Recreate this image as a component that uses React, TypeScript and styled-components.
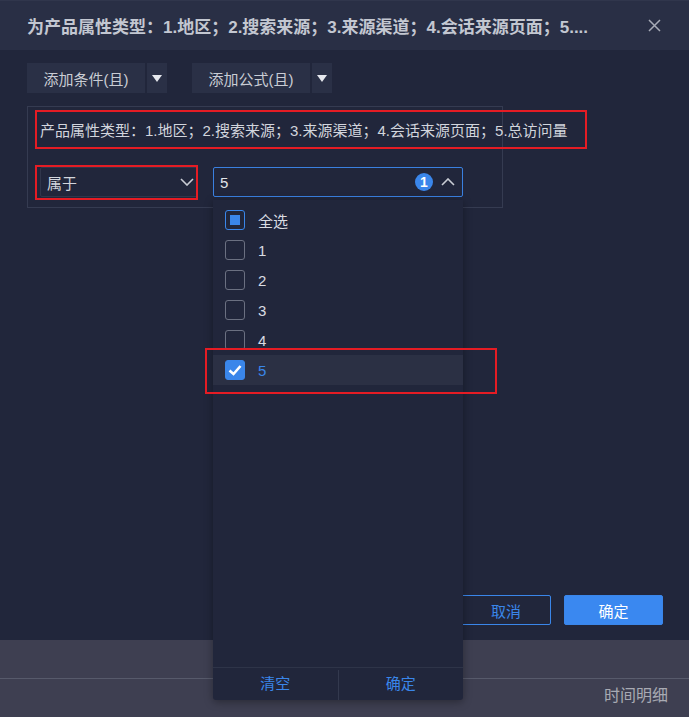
import React from 'react';
import styled, { createGlobalStyle } from 'styled-components';

const FONT = '"Liberation Sans", "Noto Sans CJK SC", sans-serif';

const GlobalStyle = createGlobalStyle`
  html, body {
    margin: 0;
    padding: 0;
    background: #3e3f51;
    font-family: ${FONT};
  }
  * { box-sizing: border-box; }
`;

const Page = styled.div`
  width: 689px;
  height: 717px;
  display: flex;
  flex-direction: column;
  overflow: hidden;
`;

const Modal = styled.div`
  height: 640px;
  background: #21263b;
  display: flex;
  flex-direction: column;
`;

const Header = styled.div`
  height: 50px;
  flex: none;
  background: #292f45;
  border-top: 1px solid #30364c;
  display: flex;
  align-items: center;
  justify-content: space-between;
  padding: 0 28px 0 27px;
`;

const Title = styled.div`
  color: #c3c7d1;
  font-size: 17px;
  font-weight: bold;
  white-space: nowrap;
`;

const CloseBtn = styled.button`
  border: 0;
  background: none;
  padding: 0;
  width: 14px;
  height: 14px;
  display: flex;
  align-items: center;
  justify-content: center;
`;

const Body = styled.div`
  flex: 1;
  padding: 13px 27px 0;
`;

const Toolbar = styled.div`
  display: flex;
  gap: 25px;
`;

const SplitGroup = styled.div`
  display: flex;
  gap: 2px;
`;

const ToolButton = styled.button`
  height: 30px;
  width: 118px;
  border: 0;
  background: #2a3046;
  color: #c9ccd4;
  font-family: ${FONT};
  font-size: 15px;
  padding: 0;
`;

const ArrowButton = styled.button`
  height: 30px;
  width: 20px;
  border: 0;
  background: #2a3046;
  display: flex;
  align-items: center;
  justify-content: center;
  padding: 0;
`;

const ConditionBox = styled.div`
  margin-top: 13px;
  width: 476px;
  height: 102px;
  border: 1px solid #353b51;
  padding: 3px 0 0 7px;
`;

const Label = styled.div`
  width: 552px;
  height: 39px;
  border: 2px solid #e51c24;
  display: flex;
  align-items: center;
  padding-left: 3px;
  color: #d2d5dd;
  font-size: 15px;
  white-space: nowrap;
`;

const FieldRow = styled.div`
  margin-top: 16px;
  display: flex;
  align-items: flex-start;
  gap: 15px;
`;

const Mark = styled.div`
  border: 2px solid #e51c24;
  padding: 0 0 1px 3px;
  width: 163px;
  height: 35px;
  overflow: hidden;
`;

const SingleSelect = styled.div`
  width: 160px;
  height: 30px;
  border: 1px solid #30364b;
  border-radius: 2px;
  display: flex;
  align-items: center;
  justify-content: space-between;
  padding: 0 5px 0 6px;
  color: #d2d5dd;
  font-size: 15px;
`;

const MultiWrap = styled.div`
  position: relative;
  margin-top: 2px;
`;

const MultiSelect = styled.div`
  width: 250px;
  height: 30px;
  border: 1px solid #3a80e0;
  border-radius: 2px;
  display: flex;
  align-items: center;
  padding: 0 7px 0 6px;
  color: #e2e4ea;
  font-size: 15px;
`;

const Value = styled.span`
  flex: 1;
`;

const Badge = styled.span`
  width: 18px;
  height: 18px;
  border-radius: 50%;
  background: #3a86ea;
  color: #fff;
  font-size: 14px;
  font-weight: bold;
  display: flex;
  align-items: center;
  justify-content: center;
  margin-right: 8px;
`;

const Dropdown = styled.div`
  position: absolute;
  left: 0;
  top: 33px;
  width: 250px;
  height: 500px;
  background: #21263b;
  border-radius: 0 0 3px 3px;
  box-shadow: 0 2px 8px rgba(0, 0, 0, 0.35);
  display: flex;
  flex-direction: column;
  z-index: 5;
`;

const List = styled.div`
  flex: 1;
  padding-top: 5px;
`;

const Option = styled.div<{ $active?: boolean }>`
  position: relative;
  height: 30px;
  display: flex;
  align-items: center;
  gap: 13px;
  padding-left: 12px;
  background: ${p => (p.$active ? '#2b3044' : 'transparent')};
  color: ${p => (p.$active ? '#3a86ea' : '#d9dce3')};
  font-size: 15px;
`;

const Box = styled.span<{ $state: 'on' | 'off' | 'some' }>`
  width: 20px;
  height: 20px;
  border-radius: 3px;
  border: 1.5px solid ${p => (p.$state === 'off' ? '#6b7081' : '#3a86ea')};
  background: ${p => (p.$state === 'on' ? '#3a86ea' : 'transparent')};
  display: flex;
  align-items: center;
  justify-content: center;
`;

const Dot = styled.span`
  width: 10px;
  height: 10px;
  background: #3a86ea;
`;

const RowMark = styled.div`
  position: absolute;
  left: -8px;
  right: -34px;
  top: -7px;
  bottom: -9px;
  border: 2px solid #e51c24;
  pointer-events: none;
`;

const DropFooter = styled.div`
  height: 33px;
  border-top: 1px solid #2e3448;
  display: flex;
`;

const FooterLink = styled.button`
  flex: 1;
  border: 0;
  background: none;
  color: #3a86ea;
  font-family: ${FONT};
  font-size: 15px;
  padding: 0 0 3px;
  & + & {
    border-left: 1px solid #33394e;
    margin: 2px 0 0;
    padding: 0 0 5px;
  }
`;

const ModalFooter = styled.div`
  display: flex;
  justify-content: flex-end;
  gap: 13px;
  padding: 0 26px 15px 0;
`;

const FooterButton = styled.button<{ $primary?: boolean; $w: number }>`
  width: ${p => p.$w}px;
  height: 30px;
  border-radius: 2px;
  font-family: ${FONT};
  font-size: 15px;
  border: 1px solid #3a86ea;
  background: ${p => (p.$primary ? '#3a88f0' : 'transparent')};
  color: ${p => (p.$primary ? '#ffffff' : '#3a86ea')};
`;

const Backdrop = styled.div`
  flex: 1;
  display: flex;
  flex-direction: column;
`;

const Strip = styled.div`
  height: 39px;
  border-bottom: 1px solid #575a6b;
`;

const Tab = styled.div`
  display: flex;
  justify-content: flex-end;
  padding: 3px 21px 0 0;
  color: #a8aab3;
  font-size: 16px;
`;

const Chevron = ({ up }: { up?: boolean }) => (
  <svg width="14" height="8" viewBox="0 0 14 8">
    <path
      d={up ? 'M1 7 L7 1 L13 7' : 'M1 1 L7 7 L13 1'}
      fill="none"
      stroke="#c9ccd4"
      strokeWidth="1.6"
    />
  </svg>
);

const Caret = () => (
  <svg width="10" height="7" viewBox="0 0 10 7">
    <path d="M0 0 H10 L5 7 Z" fill="#e6e8ee" />
  </svg>
);

const Check = () => (
  <svg width="14" height="12" viewBox="0 0 14 12">
    <path d="M1.5 6.5 L5.5 10 L12.5 2" fill="none" stroke="#fff" strokeWidth="2.6" />
  </svg>
);

const options = ['1', '2', '3', '4', '5'];

export default function App() {
  return (
    <Page>
      <GlobalStyle />
      <Modal>
        <Header>
          <Title>为产品属性类型：1.地区；2.搜索来源；3.来源渠道；4.会话来源页面；5....</Title>
          <CloseBtn>
            <svg width="13" height="13" viewBox="0 0 13 13">
              <path d="M1 1 L12 12 M12 1 L1 12" stroke="#a7abb7" strokeWidth="1.5" />
            </svg>
          </CloseBtn>
        </Header>
        <Body>
          <Toolbar>
            <SplitGroup>
              <ToolButton>添加条件(且)</ToolButton>
              <ArrowButton><Caret /></ArrowButton>
            </SplitGroup>
            <SplitGroup>
              <ToolButton>添加公式(且)</ToolButton>
              <ArrowButton><Caret /></ArrowButton>
            </SplitGroup>
          </Toolbar>
          <ConditionBox>
            <Label>产品属性类型：1.地区；2.搜索来源；3.来源渠道；4.会话来源页面；5.总访问量</Label>
            <FieldRow>
              <Mark>
                <SingleSelect>
                  <span>属于</span>
                  <Chevron />
                </SingleSelect>
              </Mark>
              <MultiWrap>
                <MultiSelect>
                  <Value>5</Value>
                  <Badge>1</Badge>
                  <Chevron up />
                </MultiSelect>
                <Dropdown>
                  <List>
                    <Option>
                      <Box $state="some"><Dot /></Box>
                      全选
                    </Option>
                    {options.map(o => (
                      <Option key={o} $active={o === '5'}>
                        <Box $state={o === '5' ? 'on' : 'off'}>{o === '5' && <Check />}</Box>
                        {o}
                        {o === '5' && <RowMark />}
                      </Option>
                    ))}
                  </List>
                  <DropFooter>
                    <FooterLink>清空</FooterLink>
                    <FooterLink>确定</FooterLink>
                  </DropFooter>
                </Dropdown>
              </MultiWrap>
            </FieldRow>
          </ConditionBox>
        </Body>
        <ModalFooter>
          <FooterButton $w={90}>取消</FooterButton>
          <FooterButton $w={99} $primary>确定</FooterButton>
        </ModalFooter>
      </Modal>
      <Backdrop>
        <Strip />
        <Tab>时间明细</Tab>
      </Backdrop>
    </Page>
  );
}
